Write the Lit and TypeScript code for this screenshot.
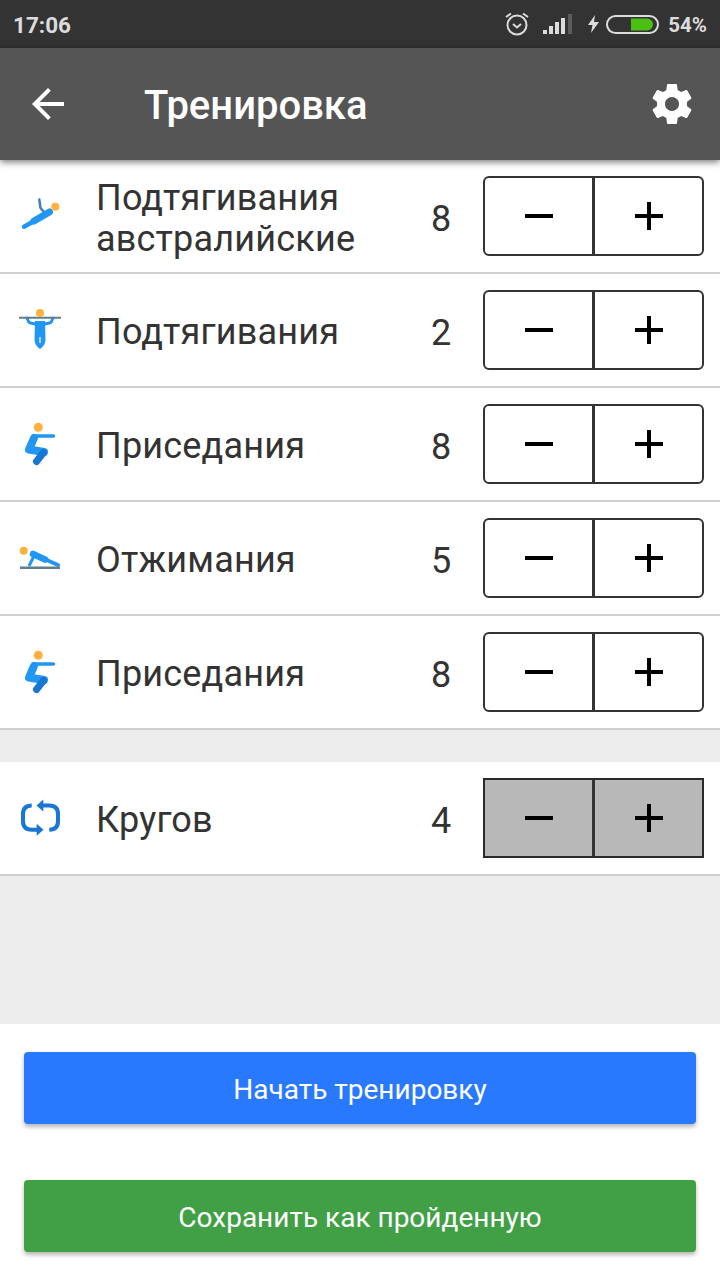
import { LitElement, html, css, svg } from "lit";
import { customElement } from "lit/decorators.js";

const BLUE = "#2196f3";
const DARK = "#1976d2";
const ORANGE = "#ffb13d";
const BAR = "#607d8b";

const australian = svg`
  <path d="M23.300 7.500 L24.500 16 L28 20" fill="none" stroke="#3f7fb5" stroke-width="2.500" stroke-linecap="round" stroke-linejoin="round"/>
  <path d="M8 34.700 L20 28" fill="none" stroke="${BLUE}" stroke-width="4.500" stroke-linecap="round"/>
  <path d="M18 29 L33.500 20" fill="none" stroke="${BLUE}" stroke-width="7" stroke-linecap="round"/>
  <circle cx="39.300" cy="14.700" r="4" fill="${ORANGE}"/>`;

const pullup = svg`
  <path d="M11 12 L13 16.500 L19 18 M37 12 L35 16.500 L29 18" fill="none" stroke="${BLUE}" stroke-width="3" stroke-linecap="round" stroke-linejoin="round"/>
  <line x1="3" y1="11.800" x2="45" y2="11.800" stroke="${BAR}" stroke-width="2"/>
  <path d="M19 15 H29 L29.500 34 Q29 40 24 43 Q19 40 18.500 34 Z" fill="${BLUE}"/>
  <path d="M24 31 V37" stroke="#fff" stroke-width="1.200"/>
  <circle cx="24" cy="7" r="4" fill="${ORANGE}"/>`;

const squat = svg`
  <circle cx="22.300" cy="7.300" r="4.500" fill="${ORANGE}"/>
  <path d="M18 16 H37.500" fill="none" stroke="${BLUE}" stroke-width="3.500" stroke-linecap="round"/>
  <path d="M18 18 L13 29.500 L28 32" fill="none" stroke="${BLUE}" stroke-width="8" stroke-linecap="round" stroke-linejoin="round"/>
  <path d="M27.500 32.500 L20.500 41.500" fill="none" stroke="${DARK}" stroke-width="7" stroke-linecap="round"/>`;

const pushup = svg`
  <rect x="4" y="32.500" width="40" height="2.500" fill="${BAR}"/>
  <path d="M17 20 L42 31" fill="none" stroke="${BLUE}" stroke-width="4" stroke-linecap="round"/>
  <path d="M17 20 L29 25.500" fill="none" stroke="${BLUE}" stroke-width="6.500" stroke-linecap="round"/>
  <path d="M17.500 23 L13.500 31" fill="none" stroke="${BLUE}" stroke-width="3" stroke-linecap="round"/>
  <circle cx="7.700" cy="16.700" r="4" fill="${ORANGE}"/>`;

const loop = svg`
  <path d="M15.700 11.500 Q7 11.500 7 20 V27 Q7 35.700 15.700 35.700 H22" fill="none" stroke="${DARK}" stroke-width="4"/>
  <path d="M33.300 35.700 Q42 35.700 42 27 V20 Q42 11.500 33.300 11.500 H26" fill="none" stroke="${DARK}" stroke-width="4"/>
  <path d="M20.700 29.700 L27.500 35.700 L20.700 41.700 Z" fill="${DARK}"/>
  <path d="M27.300 5.500 L20.500 11.500 L27.300 17.500 Z" fill="${DARK}"/>`;

type Row = { icon: unknown; name: string[]; n: number };

const ROWS: Row[] = [
  { icon: australian, name: ["Подтягивания", "австралийские"], n: 8 },
  { icon: pullup, name: ["Подтягивания"], n: 2 },
  { icon: squat, name: ["Приседания"], n: 8 },
  { icon: pushup, name: ["Отжимания"], n: 5 },
  { icon: squat, name: ["Приседания"], n: 8 },
];

@customElement("app-root")
export class AppRoot extends LitElement {
  static styles = css`
    :host {
      display: block;
      width: 720px;
      height: 1280px;
      background: #ededed;
      font-family: Roboto, "Liberation Sans", sans-serif;
      color: #333;
      overflow: hidden;
    }
    .page { display: flex; flex-direction: column; height: 1280px; }

    .status {
      height: 48px;
      background: #333;
      display: flex;
      align-items: center;
      padding: 0 13px;
      color: #dcdcdc;
      font-size: 22.500px;
      font-weight: 700;
      flex: none;
    }
    .status .time { flex: 1; padding-top: 2px; }
    .status svg { display: block; flex: none; }
    .alarm { margin-right: 13px; }
    .signal { margin-right: 15px; }
    .bolt { margin-right: 7px; }
    .batt { margin-right: 9px; }
    .pct { font-size: 20.500px; padding-top: 2px; }

    .toolbar {
      height: 112px;
      background: #555;
      flex: none;
      display: flex;
      align-items: center;
      padding: 0 24px;
      color: #fff;
      position: relative;
      z-index: 2;
      box-shadow: 0 2px 7px rgba(0, 0, 0, 0.55);
    }
    .toolbar svg { display: block; flex: none; fill: #fff; }
    .title {
      flex: 1;
      margin-left: 72px;
      font-size: 40px;
      font-weight: 500;
      padding-top: 3px;
    }

    .row {
      height: 112px;
      flex: none;
      background: #fff;
      border-bottom: 2px solid #d0d0d0;
      display: flex;
      align-items: center;
      padding: 0 16px;
    }
    .row svg.ic { display: block; width: 48px; height: 48px; flex: none; }
    .name {
      flex: 1;
      margin-left: 32px;
      font-size: 36px;
      letter-spacing: 0.2px;
      line-height: 41px;
      color: #333;
      padding-top: 5px;
    }
    .name div { white-space: nowrap; }
    .num {
      width: 42px;
      margin-right: 21px;
      text-align: center;
      font-size: 36px;
      color: #333;
      padding-top: 5px;
    }

    .stepper {
      width: 221px;
      height: 80px;
      box-sizing: border-box;
      border: 2px solid #333;
      border-radius: 6px;
      display: flex;
      flex: none;
      overflow: hidden;
      background: #fff;
    }
    .stepper.alt {
      background: #b8b8b8;
      border-radius: 0;
      border-color: #2a2a2a;
    }
    .stepper button {
      flex: 0 0 107px;
      box-sizing: border-box;
      padding: 0;
      border: 0;
      background: transparent;
      display: flex;
      align-items: center;
      justify-content: center;
    }
    .stepper button + button { flex: 0 0 110px; border-left: 3px solid #333; }
    .stepper svg { display: block; width: 28px; height: 28px; fill: #000; }

    .gap { height: 32px; flex: none; }
    .spacer { flex: 1; }

    .footer {
      flex: none;
      height: 256px;
      box-sizing: border-box;
      background: #fff;
      padding: 28px 24px 0;
      display: flex;
      flex-direction: column;
      gap: 56px;
    }
    .cta {
      height: 72px;
      border: 0;
      border-radius: 4px;
      color: #fff;
      font-family: inherit;
      font-size: 28px;
      padding: 2px 0 0;
      box-shadow: 0 3px 4px rgba(0, 0, 0, 0.28);
    }
    .cta.blue { background: #2979ff; }
    .cta.green { background: #41a046; }
  `;

  private stepper(alt = false) {
    return html`<div class="stepper ${alt ? "alt" : ""}">
      <button aria-label="минус"><svg viewBox="0 0 28 28"><rect x="0" y="12" width="28" height="4"/></svg></button>
      <button aria-label="плюс"><svg viewBox="0 0 28 28"><rect x="0" y="12" width="28" height="4"/><rect x="12" y="0" width="4" height="28"/></svg></button>
    </div>`;
  }

  private row(icon: unknown, name: string[], n: number, alt = false) {
    return html`<div class="row">
      <svg class="ic" viewBox="0 0 48 48">${icon}</svg>
      <div class="name">${name.map((l) => html`<div>${l}</div>`)}</div>
      <div class="num">${n}</div>
      ${this.stepper(alt)}
    </div>`;
  }

  render() {
    return html`<div class="page">
      <div class="status">
        <span class="time">17:06</span>
        <svg class="alarm" width="26" height="26" viewBox="0 0 26 26" fill="none" stroke="#dcdcdc" stroke-width="2">
          <circle cx="13" cy="14" r="9.500"/>
          <path d="M9 13 L13 16.500 L17 13"/>
          <path d="M2 6 L7 2.500 M24 6 L19 2.500"/>
        </svg>
        <svg class="signal" width="30" height="20" viewBox="0 0 30 20">
          <rect x="0" y="16" width="4" height="4" fill="#dcdcdc"/>
          <rect x="6" y="12" width="4" height="8" fill="#dcdcdc"/>
          <rect x="12" y="8" width="4" height="12" fill="#dcdcdc"/>
          <rect x="18" y="4" width="4" height="16" fill="#dcdcdc"/>
          <rect x="25" y="0" width="4" height="20" fill="#5c5c5c"/>
        </svg>
        <svg class="bolt" width="11" height="18" viewBox="0 0 11 18"><path d="M7 0 L0 10 H4.500 L3 18 L11 7 H6 Z" fill="#dcdcdc"/></svg>
        <svg class="batt" width="53" height="19" viewBox="0 0 53 19">
          <rect x="1" y="1" width="51" height="17" rx="8.500" fill="none" stroke="#dcdcdc" stroke-width="2"/>
          <path d="M25 3.500 H41 A6 6 0 0 1 41 15.500 H25 Z" fill="#4cc012"/>
        </svg>
        <span class="pct">54%</span>
      </div>

      <div class="toolbar">
        <svg width="48" height="48" viewBox="0 0 24 24"><path d="M20 11H7.830l5.590-5.590L12 4l-8 8 8 8 1.410-1.410L7.830 13H20v-2z"/></svg>
        <div class="title">Тренировка</div>
        <svg width="48" height="48" viewBox="0 0 24 24"><path d="M19.430 12.980c.04-.32.07-.64.07-.98s-.03-.66-.07-.98l2.110-1.650c.19-.15.24-.42.12-.64l-2-3.460c-.12-.22-.39-.3-.61-.22l-2.490 1c-.52-.4-1.080-.73-1.690-.98l-.38-2.650C14.460 2.180 14.250 2 14 2h-4c-.25 0-.46.18-.49.42l-.38 2.650c-.61.25-1.170.59-1.690.98l-2.490-1c-.23-.09-.49 0-.61.22l-2 3.460c-.13.22-.07.49.12.64l2.110 1.650c-.04.32-.07.65-.07.98s.03.66.07.98l-2.110 1.650c-.19.15-.24.42-.12.64l2 3.460c.12.22.39.3.61.22l2.490-1c.52.4 1.080.73 1.690.98l.38 2.650c.03.24.24.42.49.42h4c.25 0 .46-.18.49-.42l.38-2.650c.61-.25 1.170-.59 1.690-.98l2.490 1c.23.09.49 0 .61-.22l2-3.460c.12-.22.07-.49-.12-.64l-2.110-1.650zM12 15.500c-1.930 0-3.500-1.570-3.500-3.500s1.570-3.500 3.500-3.500 3.500 1.570 3.500 3.500-1.570 3.500-3.500 3.500z"/></svg>
      </div>

      ${ROWS.map((r) => this.row(r.icon, r.name, r.n))}
      <div class="gap"></div>
      ${this.row(loop, ["Кругов"], 4, true)}
      <div class="spacer"></div>

      <div class="footer">
        <button class="cta blue">Начать тренировку</button>
        <button class="cta green">Сохранить как пройденную</button>
      </div>
    </div>`;
  }
}
